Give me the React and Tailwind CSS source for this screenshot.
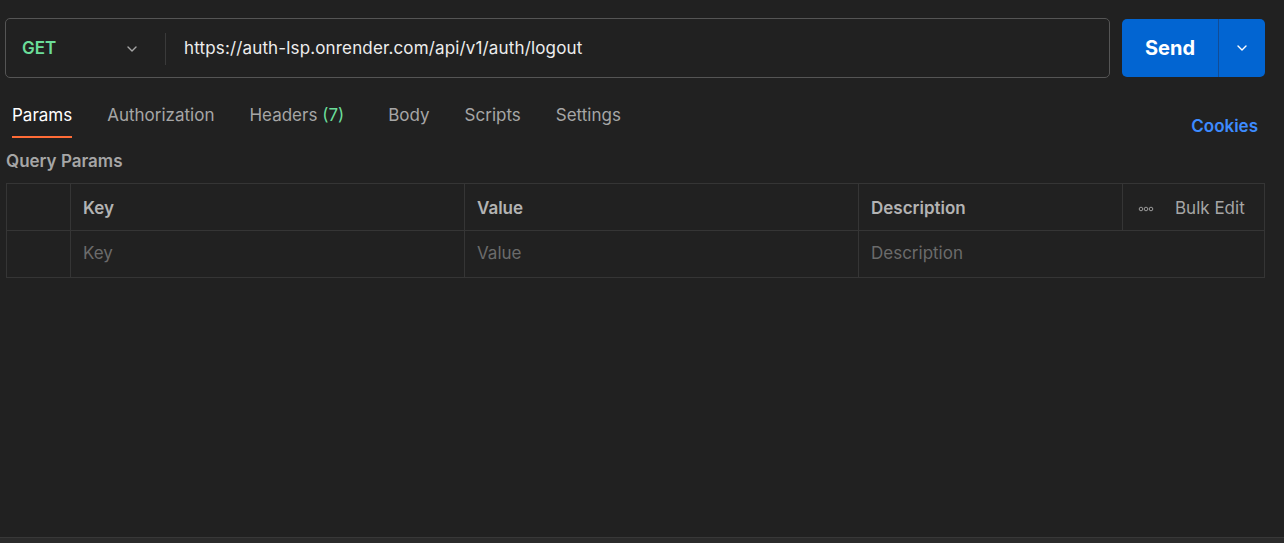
import React from 'react';

const Chevron = ({ className }) => (
  <svg className={className} viewBox="0 0 16 16" fill="none" stroke="currentColor" strokeWidth="1.4" strokeLinecap="round" strokeLinejoin="round">
    <path d="M4 6l4 4 4-4" />
  </svg>
);

const tabs = [
  { label: 'Params', active: true },
  { label: 'Authorization' },
  { label: 'Headers', count: 7 },
  { label: 'Body' },
  { label: 'Scripts' },
  { label: 'Settings' },
];

export default function App() {
  return (
    <div
      className="h-[543px] w-full bg-[#212121] flex flex-col overflow-hidden"
      style={{ fontFamily: 'Inter, "Noto Sans", sans-serif' }}
    >
      {/* URL bar + Send */}
      <div className="flex items-start pt-[18px] pl-[5px] pr-[19px]">
        <div className="flex-1 h-[60px] border border-[#555555] rounded-[5px] flex items-center pt-[2px]">
          <div className="w-[159px] flex items-center justify-between pl-[16px] pr-[25px]">
            <span className="text-[17px] font-semibold text-[#6bdd9a]">GET</span>
            <Chevron className="w-[16px] h-[16px] text-[#a6a6a6]" />
          </div>
          <div className="w-px h-[32px] bg-[#3a3a3a]" />
          <span className="pl-[18px] text-[17px] tracking-[0.15px] text-[#ededed]">https://auth-lsp.onrender.com/api/v1/auth/logout</span>
        </div>
        <div className="ml-[12px] mt-[1px] h-[58px] w-[143px] rounded-[5px] bg-[#0265d2] flex items-center">
          <span className="w-[96px] text-center text-[20px] font-bold text-white">Send</span>
          <div className="w-px h-full bg-[#114c96]" />
          <div className="flex-1 flex justify-center">
            <Chevron className="w-[16px] h-[16px] text-white" />
          </div>
        </div>
      </div>

      {/* Tabs */}
      <div className="flex items-end pl-[12px] pr-[26px] mt-[24px]">
        <div className="flex gap-[35px]">
          {tabs.map((t) => (
            <div key={t.label} className={`flex flex-col ${t.count ? 'mr-[9px]' : ''}`}>
              <span className={`text-[17px] leading-[26px] ${t.active ? 'text-white' : 'text-[#a6a6a6]'}`}>
                {t.label}
                {t.count && <span className="text-[#6bdd9a]"> ({t.count})</span>}
              </span>
              <div className={`mt-[8px] h-[2px] ${t.active ? 'bg-[#ff6c37]' : 'bg-transparent'}`} />
            </div>
          ))}
        </div>
        <span className="ml-auto mb-[-1px] text-[17px] font-semibold text-[#3d8bff]">Cookies</span>
      </div>

      {/* Query params */}
      <div className="px-[6px] pr-[19px]">
        <div className="mt-[12px] text-[17px] font-semibold text-[#a6a6a6] leading-[22px]">Query Params</div>
        <div className="mt-[11px] border border-[#353535]">
          <div className="flex h-[47px] border-b border-[#353535]">
            <div className="w-[64px] border-r border-[#353535]" />
            <div className="w-[394px] border-r border-[#353535] flex items-center pt-[3px] pl-[12px] text-[17px] font-semibold text-[#b3b3b3]">Key</div>
            <div className="w-[394px] border-r border-[#353535] flex items-center pt-[3px] pl-[12px] text-[17px] font-semibold text-[#b3b3b3]">Value</div>
            <div className="w-[264px] border-r border-[#353535] flex items-center pt-[3px] pl-[12px] text-[17px] font-semibold text-[#b3b3b3]">Description</div>
            <div className="flex-1 flex items-center pt-[3px] pl-[15px] text-[17px] text-[#a6a6a6]">
              <svg className="w-[16px] h-[6px] mr-[21px]" viewBox="0 0 16 6" fill="none" stroke="#9a9a9a" strokeWidth="1">
                <circle cx="3" cy="3" r="1.8" />
                <circle cx="8" cy="3" r="1.8" />
                <circle cx="13" cy="3" r="1.8" />
              </svg>
              Bulk Edit
            </div>
          </div>
          <div className="flex h-[46px]">
            <div className="w-[64px] border-r border-[#353535]" />
            <div className="w-[394px] border-r border-[#353535] flex items-center pl-[12px] text-[17px] text-[#6b6b6b]">Key</div>
            <div className="w-[394px] border-r border-[#353535] flex items-center pl-[12px] text-[17px] text-[#6b6b6b]">Value</div>
            <div className="flex-1 flex items-center pl-[12px] text-[17px] text-[#6b6b6b]">Description</div>
          </div>
        </div>
      </div>

      <div className="mt-auto h-[6px] border-t border-[#383838] bg-[#2b2b2b]" />
    </div>
  );
}
